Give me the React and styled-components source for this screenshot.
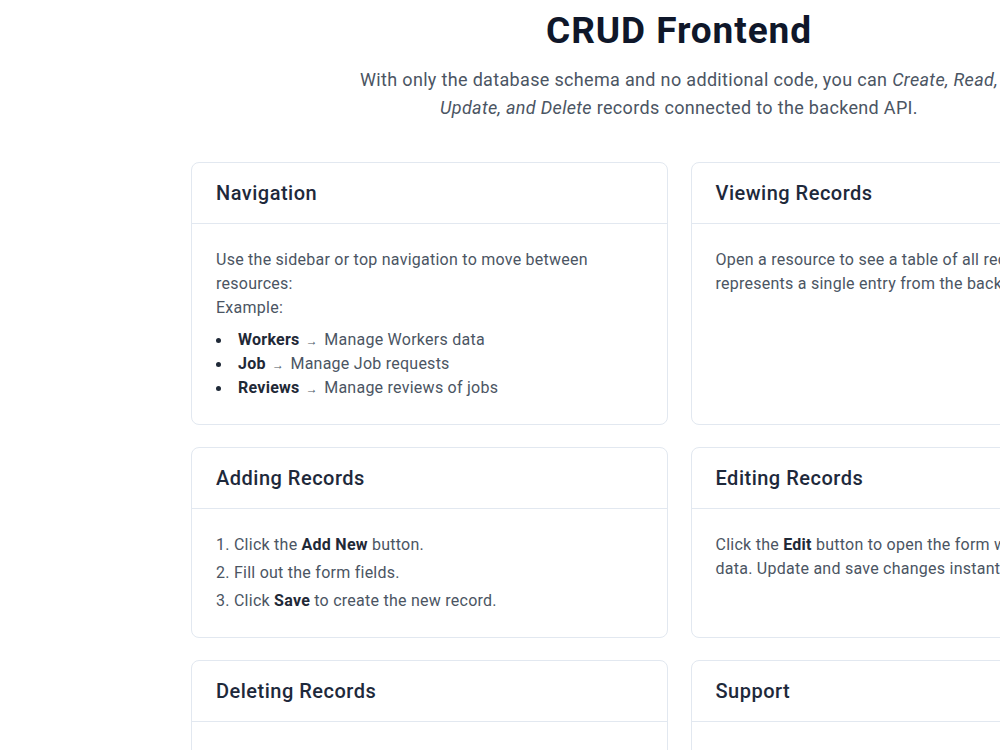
import React from "react";
import styled, { createGlobalStyle } from "styled-components";

const GlobalStyle = createGlobalStyle`
  * { box-sizing: border-box; }
  html, body { margin: 0; padding: 0; background: #ffffff; }
  body {
    font-family: Roboto, "Liberation Sans", sans-serif;
    color: #4b5563;
    overflow: hidden;
    -webkit-font-smoothing: antialiased;
  }
`;

const Page = styled.main`
  width: 1024px;
  margin-left: 167px;
  padding: 11px 24px 40px;
`;

const Hero = styled.header`
  display: flex;
  flex-direction: column;
  align-items: center;
  text-align: center;
  margin-bottom: 40px;
`;

const Title = styled.h1`
  margin: 0 0 15px;
  font-size: 37px;
  line-height: 40px;
  font-weight: 700;
  letter-spacing: 0.9px;
  color: #0f172a;
`;

const Lead = styled.p`
  margin: 0;
  max-width: 672px;
  font-size: 18px;
  line-height: 28px;
  letter-spacing: 0.33px;
  color: #4b5563;

  em { font-style: italic; }
`;

const Grid = styled.section`
  display: grid;
  grid-template-columns: 1fr 1fr;
  column-gap: 23px;
  row-gap: 22px;
`;

const Card = styled.article`
  border: 1px solid #e2e8f0;
  border-radius: 8px;
  background: #ffffff;
  display: flex;
  flex-direction: column;
`;

const CardHeader = styled.div`
  padding: 16px 24px;
  border-bottom: 1px solid #e2e8f0;
`;

const CardTitle = styled.h2`
  margin: 0;
  font-size: 20px;
  line-height: 28px;
  font-weight: 500;
  letter-spacing: 0.5px;
  color: #1e293b;
`;

const CardBody = styled.div`
  padding: 24px;
  font-size: 16px;
  line-height: 24px;
  letter-spacing: 0.25px;
  color: #4b5563;

  p { margin: 0; }
  strong { font-weight: 700; color: #1f2937; }
`;

const BulletList = styled.ul`
  margin: 8px 0 0;
  padding: 0;
  list-style: none;

  li::before {
    content: "";
    display: inline-block;
    width: 5px;
    height: 5px;
    margin-right: 17px;
    border-radius: 50%;
    background: #1f2937;
    vertical-align: middle;
  }
`;

const StepList = styled.ol`
  margin: 0;
  padding: 0;
  list-style: decimal inside;
  display: flex;
  flex-direction: column;
  gap: 4px;
`;

const Arrow = styled.span`
  font-size: 12px;
  line-height: 0;
  margin: 0 2px;
`;

const sections = [
  {
    title: "Navigation",
    body: (
      <>
        <p>
          Use the sidebar or top navigation to move between resources:
          <br />
          Example:
        </p>
        <BulletList>
          <li>
            <strong>Workers</strong> <Arrow>→</Arrow> Manage Workers data
          </li>
          <li>
            <strong>Job</strong> <Arrow>→</Arrow> Manage Job requests
          </li>
          <li>
            <strong>Reviews</strong> <Arrow>→</Arrow> Manage reviews of jobs
          </li>
        </BulletList>
      </>
    ),
  },
  {
    title: "Viewing Records",
    body: (
      <p>
        Open a resource to see a table of all records. Each row represents a
        single entry from the backend database.
      </p>
    ),
  },
  {
    title: "Adding Records",
    body: (
      <StepList>
        <li>
          Click the <strong>Add New</strong> button.
        </li>
        <li>Fill out the form fields.</li>
        <li>
          Click <strong>Save</strong> to create the new record.
        </li>
      </StepList>
    ),
  },
  {
    title: "Editing Records",
    body: (
      <p>
        Click the <strong>Edit</strong> button to open the form with the
        existing data. Update and save changes instantly.
      </p>
    ),
  },
  {
    title: "Deleting Records",
    body: (
      <p>
        Click the <strong>Delete</strong> button and confirm to remove a record
        permanently.
      </p>
    ),
  },
  {
    title: "Support",
    body: <p>Contact the administrator if you run into any issues.</p>,
  },
];

export default function App() {
  return (
    <>
      <GlobalStyle />
      <Page>
        <Hero>
          <Title>CRUD Frontend</Title>
          <Lead>
            With only the database schema and no additional code, you can{" "}
            <em>Create, Read, Update, and Delete</em> records connected to the
            backend API.
          </Lead>
        </Hero>
        <Grid>
          {sections.map((s) => (
            <Card key={s.title}>
              <CardHeader>
                <CardTitle>{s.title}</CardTitle>
              </CardHeader>
              <CardBody>{s.body}</CardBody>
            </Card>
          ))}
        </Grid>
      </Page>
    </>
  );
}
